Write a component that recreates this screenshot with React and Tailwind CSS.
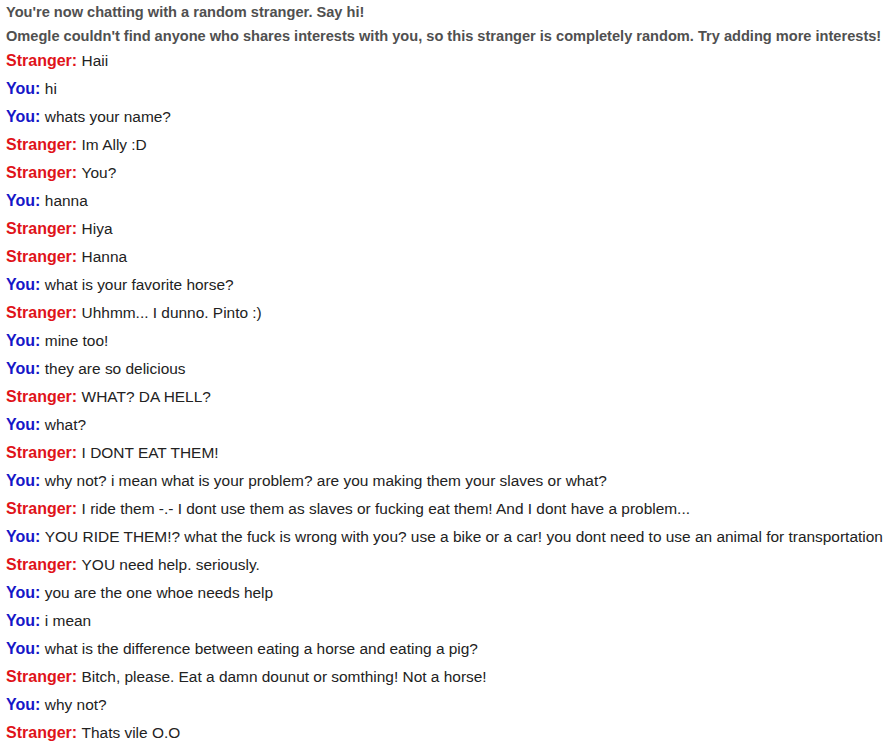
import React from 'react';

const messages = [
  ['s', 'Haii'],
  ['y', 'hi'],
  ['y', 'whats your name?'],
  ['s', 'Im Ally :D'],
  ['s', 'You?'],
  ['y', 'hanna'],
  ['s', 'Hiya'],
  ['s', 'Hanna'],
  ['y', 'what is your favorite horse?'],
  ['s', 'Uhhmm... I dunno. Pinto :)'],
  ['y', 'mine too!'],
  ['y', 'they are so delicious'],
  ['s', 'WHAT? DA HELL?'],
  ['y', 'what?'],
  ['s', 'I DONT EAT THEM!'],
  ['y', 'why not? i mean what is your problem? are you making them your slaves or what?'],
  ['s', 'I ride them -.- I dont use them as slaves or fucking eat them! And I dont have a problem...'],
  ['y', 'YOU RIDE THEM!? what the fuck is wrong with you? use a bike or a car! you dont need to use an animal for transportation'],
  ['s', 'YOU need help. seriously.'],
  ['y', 'you are the one whoe needs help'],
  ['y', 'i mean'],
  ['y', 'what is the difference between eating a horse and eating a pig?'],
  ['s', 'Bitch, please. Eat a damn dounut or somthing! Not a horse!'],
  ['y', 'why not?'],
  ['s', 'Thats vile O.O'],
];

const App = () => {
  return (
    <div className="min-h-screen w-[893px] bg-white px-[6px] font-['Liberation_Sans',Arial,sans-serif]">
      {/* status messages */}
      <div className="text-[14.6px] font-bold text-[#505050] leading-[24px]">
        <p className="whitespace-nowrap">You're now chatting with a random stranger. Say hi!</p>
        <p className="whitespace-nowrap">Omegle couldn't find anyone who shares interests with you, so this stranger is completely random. Try adding more interests!</p>
      </div>

      {/* log */}
      <div className="-mt-px text-[16px] leading-[28px] text-[#222]">
        {messages.map(([who, text], i) => (
          <p key={i} className="whitespace-nowrap">
            {who === 's' ? (
              <strong className="text-[#e0131a]">Stranger:</strong>
            ) : (
              <strong className="text-[#1616c8]">You:</strong>
            )}{' '}
            <span className="text-[15.45px]">{text}</span>
          </p>
        ))}
      </div>
    </div>
  );
};

export default App;
